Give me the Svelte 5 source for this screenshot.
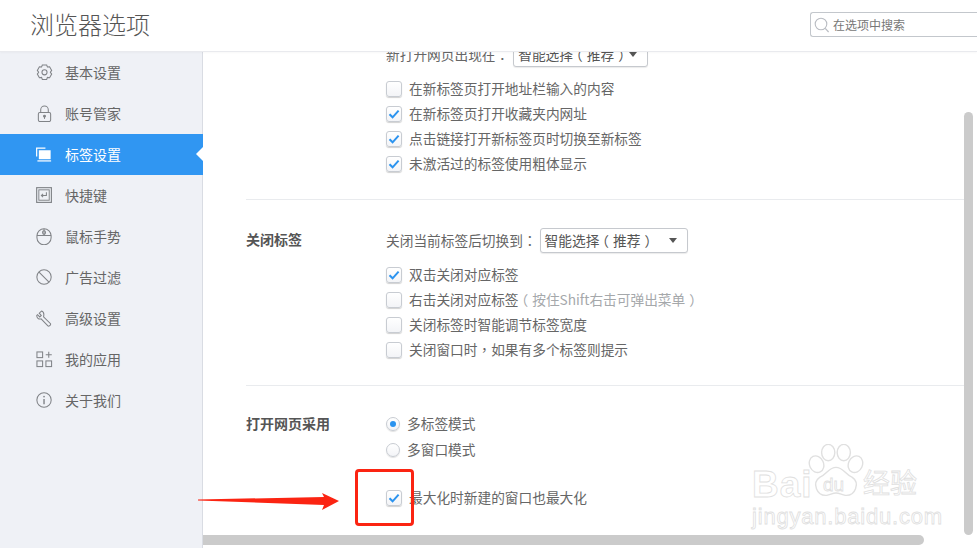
<script>
  const nav = [
    { label: '基本设置', icon: 'gear' },
    { label: '账号管家', icon: 'lock' },
    { label: '标签设置', icon: 'tabs', active: true },
    { label: '快捷键', icon: 'key' },
    { label: '鼠标手势', icon: 'mouse' },
    { label: '广告过滤', icon: 'ban' },
    { label: '高级设置', icon: 'wrench' },
    { label: '我的应用', icon: 'apps' },
    { label: '关于我们', icon: 'info' }
  ];
  const openRows = [
    { text: '在新标签页打开地址栏输入的内容', on: false },
    { text: '在新标签页打开收藏夹内网址', on: true },
    { text: '点击链接打开新标签页时切换至新标签', on: true },
    { text: '未激活过的标签使用粗体显示', on: true }
  ];
  const closeRows = [
    { text: '双击关闭对应标签', on: true },
    { text: '右击关闭对应标签', hint: '按住Shift右击可弹出菜单', on: false },
    { text: '关闭标签时智能调节标签宽度', on: false },
    { text: '关闭窗口时', tail: '如果有多个标签则提示', on: false }
  ];
</script>

{#snippet check(on)}
  <span class="box">
    {#if on}
      <svg width="12" height="10" viewBox="0 0 12 10"><path d="M1.5 5.2 4.6 8.3 10.6 1.6" fill="none" stroke="#2b93ef" stroke-width="2"/></svg>
    {/if}
  </span>
{/snippet}

{#snippet checkRow(row)}
  <div class="row">
    {@render check(row.on)}
    <span class="txt">{row.text}{#if row.tail}<span class="pt">，</span>{row.tail}{/if}{#if row.hint}<span class="hint"><span class="po">（</span>{row.hint}<span class="pc">）</span></span>{/if}</span>
  </div>
{/snippet}

{#snippet choice()}
  <span class="txt">智能选择<span class="po">（</span>推荐<span class="pc">）</span></span><i></i>
{/snippet}

<div class="page">
  <header>
    <h1>浏览器选项</h1>
    <div class="search">
      <svg width="16" height="16" viewBox="0 0 16 16"><circle cx="7" cy="7" r="5.8" fill="none" stroke="#b9bcc2" stroke-width="1.1"/><path d="M11.2 11.4 14.6 15" stroke="#b9bcc2" stroke-width="1.2" fill="none"/></svg>
      <span>在选项中搜索</span>
    </div>
  </header>
  <div class="body">
    <nav>
      {#each nav as item}
        <div class="item" class:active={item.active}>
          <svg class="ico" width="17" height="17" viewBox="0 0 18 18" fill="none" stroke="currentColor" stroke-width="1.1">
            {#if item.icon === 'gear'}
              <path d="M6.7 1.3h4.6l.8 2.1 2.3-.3 2.2 3.9-1.4 1.900 1.4 2-2.200 3.800-2.300-.3-.8 2.200H6.700l-.8-2.200-2.300.3-2.200-3.800 1.400-2-1.400-1.900 2.200-3.900 2.300.3z" transform="translate(0 -.2)"/>
              <circle cx="9" cy="8.800" r="2.700"/>
            {:else if item.icon === 'lock'}
              <rect x="2.500" y="8" width="13" height="9.500" rx="1.500"/>
              <path d="M5 8V5a4 4 0 0 1 8 0v3"/>
              <circle cx="9" cy="11.800" r="1" fill="currentColor"/>
              <path d="M9 12.500v2.200"/>
            {:else if item.icon === 'tabs'}
              <path d="M.7 11V2.200H10" stroke-width="1.300"/>
              <rect x="3" y="4.500" width="12.500" height="9.500" fill="currentColor" stroke="none"/>
              <path d="M1.500 15.800H16" stroke-width="1.300"/>
            {:else if item.icon === 'key'}
              <rect x=".7" y=".7" width="15.600" height="15.600" stroke-width="1.200"/>
              <rect x="3" y="3" width="11" height="11" stroke-width="1"/>
              <path d="M11 5.500v3.500H6M7.500 7.200 5.700 9l1.800 1.800" stroke-width="1.100"/>
            {:else if item.icon === 'mouse'}
              <rect x="1" y=".8" width="15" height="17" rx="7.500"/>
              <path d="M1 8h15M8.500.8V8"/>
              <rect x="7" y="2.800" width="3" height="3.800" rx="1.500"/>
            {:else if item.icon === 'ban'}
              <circle cx="8.500" cy="8.500" r="7.600"/>
              <path d="M3.200 3.200 13.800 13.800"/>
            {:else if item.icon === 'wrench'}
              <path d="M5.800 1.100 3.400 3.400l2.200 2.400L4 7.400 1.600 5 .8 5.800c-.2 2.300 2 4.400 4.600 3.600l7.200 7.500c.9.900 3.300-.9 2.800-2.400L8 7.200C8.700 4.200 8.300 1.800 5.800 1.100z"/>
            {:else if item.icon === 'apps'}
              <rect x="1" y="1" width="6" height="6"/>
              <rect x="1" y="10.500" width="6" height="6"/>
              <rect x="10.500" y="10.500" width="6" height="6"/>
              <path d="M13.500 .8v6.400M10.300 4h6.400"/>
            {:else}
              <circle cx="8.500" cy="8.500" r="7.600"/>
              <path d="M8.500 7.500v5.500" stroke-width="1.500"/>
              <circle cx="8.500" cy="4.800" r=".9" fill="currentColor" stroke="none"/>
            {/if}
          </svg>
          <span class="txt">{item.label}</span>
        </div>
      {/each}
    </nav>
    <main>
      <div class="content">
        <section class="first">
          <div class="label"></div>
          <div class="ctl">
            <div class="pick">
              <span class="txt">新打开网页出现在<span class="pt">：</span></span>
              <div class="select small">{@render choice()}</div>
            </div>
            {#each openRows as row}{@render checkRow(row)}{/each}
          </div>
        </section>
        <section class="second">
          <div class="label">关闭标签</div>
          <div class="ctl">
            <div class="pick">
              <span class="txt">关闭当前标签后切换到<span class="pt">：</span></span>
              <div class="select">{@render choice()}</div>
            </div>
            {#each closeRows as row}{@render checkRow(row)}{/each}
          </div>
        </section>
        <section class="third">
          <div class="label">打开网页采用</div>
          <div class="ctl">
            <div class="row radio-row"><span class="radio on"></span><span class="txt">多标签模式</span></div>
            <div class="row radio-row"><span class="radio"></span><span class="txt">多窗口模式</span></div>
            <div class="row last">{@render check(true)}<span class="txt">最大化时新建的窗口也最大化</span></div>
          </div>
        </section>
      </div>
    </main>
  </div>

  <div class="vbar"></div>
  <div class="hbar"></div>

  <div class="mark">
    <svg class="paw" width="56" height="56" viewBox="0 0 72 72" fill="#fff" stroke="#e0e0e0" stroke-width="1.800">
      <ellipse cx="11" cy="26" rx="9" ry="11" transform="rotate(-25 11 26)"/>
      <ellipse cx="26" cy="11" rx="8.500" ry="10.500"/>
      <ellipse cx="46" cy="11" rx="8.500" ry="10.500"/>
      <ellipse cx="61" cy="26" rx="9" ry="11" transform="rotate(25 61 26)"/>
      <path d="M36 30c9 0 11 8 21 13 10 7 4 24-9 23-5-1-8-3-12-3s-7 2-12 3c-13 1-19-16-9-23 10-5 12-13 21-13z"/>
    </svg>
    <span class="bai">Bai</span>
    <span class="du">du</span>
    <span class="jy">经验</span>
    <span class="url">jingyan.baidu.com</span>
  </div>

  <svg class="arrow" width="145" height="20" viewBox="0 0 145 20"><path d="M0 7.500 126 5 124 1 141 9 124 18 126 13 0 8.500z" fill="#fb2412"/></svg>
  <div class="redbox"></div>
</div>

<style>
  :global(body) { margin: 0; overflow: hidden; background: #fff; }
  .page {
    position: relative; width: 977px; height: 548px; overflow: hidden;
    font-family: "Noto Sans CJK SC", "Liberation Sans", sans-serif;
    color: #666; font-size: 13.700px;
    display: flex; flex-direction: column;
  }
  header {
    height: 51px; flex: none; display: flex; align-items: center; justify-content: space-between;
    border-bottom: 1px solid #e9eaee; box-shadow: 0 1px 2px rgba(0,0,0,.03); position: relative; z-index: 2; background: #fff;
  }
  h1 { margin: 0 0 3px 30px; font-size: 24px; font-weight: 300; color: #555; line-height: 30px; }
  .search {
    width: 163px; height: 23px; margin-top: -2px; border: 1px solid #c3c7cc; border-right: 0; border-radius: 3px 0 0 3px;
    display: flex; align-items: center; gap: 3px; padding-left: 3px; font-size: 12px; color: #777;
  }
  .txt { padding-bottom: 2px; }
  .pt { font-family: "Noto Sans CJK TC", sans-serif; }
  .po { margin-left: -.3em; margin-right: .3em; }
  .pc { margin-left: .3em; margin-right: -.3em; }
  .body { flex: 1; display: flex; min-height: 0; }
  nav { width: 202px; flex: none; background: #eff1f6; border-right: 1px solid #d9dce3; }
  .item { height: 41px; display: flex; align-items: center; gap: 12px; padding-left: 36px; font-size: 14px; color: #666; position: relative; }
  .item .ico { color: #808387; flex: none; }
  .item.active { background: #3096f2; color: #fff; margin-right: -1px; }
  .item.active .ico { color: #fff; }
  .item.active::after {
    content: ""; position: absolute; right: 0; top: 13px;
    border: 7.500px solid transparent; border-right-color: #fff; border-left: 0;
  }
  main { flex: 1; overflow: hidden; min-width: 0; }
  .content { margin-top: -10px; padding: 0 13px 0 43px; }
  section { display: flex; border-bottom: 1px solid #e9ebee; }
  .first { padding-bottom: 23px; }
  .second { padding: 28px 0 23px; }
  .third { padding-top: 25px; border-bottom: 0; }
  .label { width: 140px; flex: none; font-weight: 700; font-size: 14px; line-height: 23px; color: #555; }
  .third .label { line-height: 25px; }
  .ctl { flex: 1; min-width: 0; }
  .pick { display: flex; align-items: center; height: 25px; margin-bottom: 9px; white-space: nowrap; }
  .select {
    box-sizing: border-box; width: 148px; height: 25px; margin-left: 3px; border: 1px solid #c6c9ce; border-radius: 3px;
    display: flex; align-items: center; justify-content: space-between; padding: 0 10px 0 4px; box-shadow: 0 1px 1px rgba(0,0,0,.08);
    background: #fff; color: #555;
  }
  .select.small { width: 135px; margin-left: 4px; }
  .select i { width: 0; height: 0; border: 4px solid transparent; border-top: 5px solid #555; border-bottom: 0; }
  .row { height: 25px; display: flex; align-items: center; gap: 7px; white-space: nowrap; }
  .hint { color: #a5a8ab; }
  .box {
    box-sizing: border-box; width: 16px; height: 16px; flex: none; border: 1px solid #c8ccd2; border-radius: 3px;
    background: linear-gradient(#fff, #f3f4f7); box-shadow: 0 1px 1px rgba(0,0,0,.18);
    display: flex; align-items: center; justify-content: center;
  }
  .radio-row { gap: 7px; }
  .radio-row + .radio-row { margin-top: 1px; }
  .radio {
    box-sizing: border-box; width: 14px; height: 14px; flex: none; border: 1px solid #c8ccd2; border-radius: 50%;
    background: linear-gradient(#fff, #f3f4f7); box-shadow: 0 1px 1px rgba(0,0,0,.12); display: flex; align-items: center; justify-content: center;
  }
  .radio.on::after { content: ""; width: 6px; height: 6px; border-radius: 50%; background: #2b93ef; }
  .last { margin-top: 23px; }
  .vbar { position: absolute; left: 964px; top: 112px; width: 9px; height: 423px; border-radius: 5px; background: #cbcbcb; }
  .hbar { position: absolute; left: 203px; top: 535px; width: 721px; height: 10px; border-radius: 0 5px 5px 0; background: #cbcbcb; }
  .arrow { position: absolute; left: 198px; top: 492px; }
  .redbox { position: absolute; left: 355px; top: 469px; width: 53px; height: 51px; border: 3px solid #fb2412; border-radius: 4px; }
  .mark { position: absolute; left: 748px; top: 442px; width: 190px; height: 90px; font-family: "Liberation Sans", sans-serif; }
  .mark span { position: absolute; color: #fff; -webkit-text-stroke: .8px #e0e0e0; line-height: 1; white-space: nowrap; }
  .paw { position: absolute; left: 60px; top: 2px; }
  .bai { left: 4px; top: 24px; font-size: 37px; font-weight: 700; letter-spacing: 1px; }
  .du { left: 75px; top: 33px; font-size: 19px; }
  .jy { left: 115px; top: 26px; font-size: 27px; font-family: "Noto Sans CJK SC", sans-serif; }
  .url { left: 4px; top: 64px; font-size: 22px; letter-spacing: .8px; }
</style>
